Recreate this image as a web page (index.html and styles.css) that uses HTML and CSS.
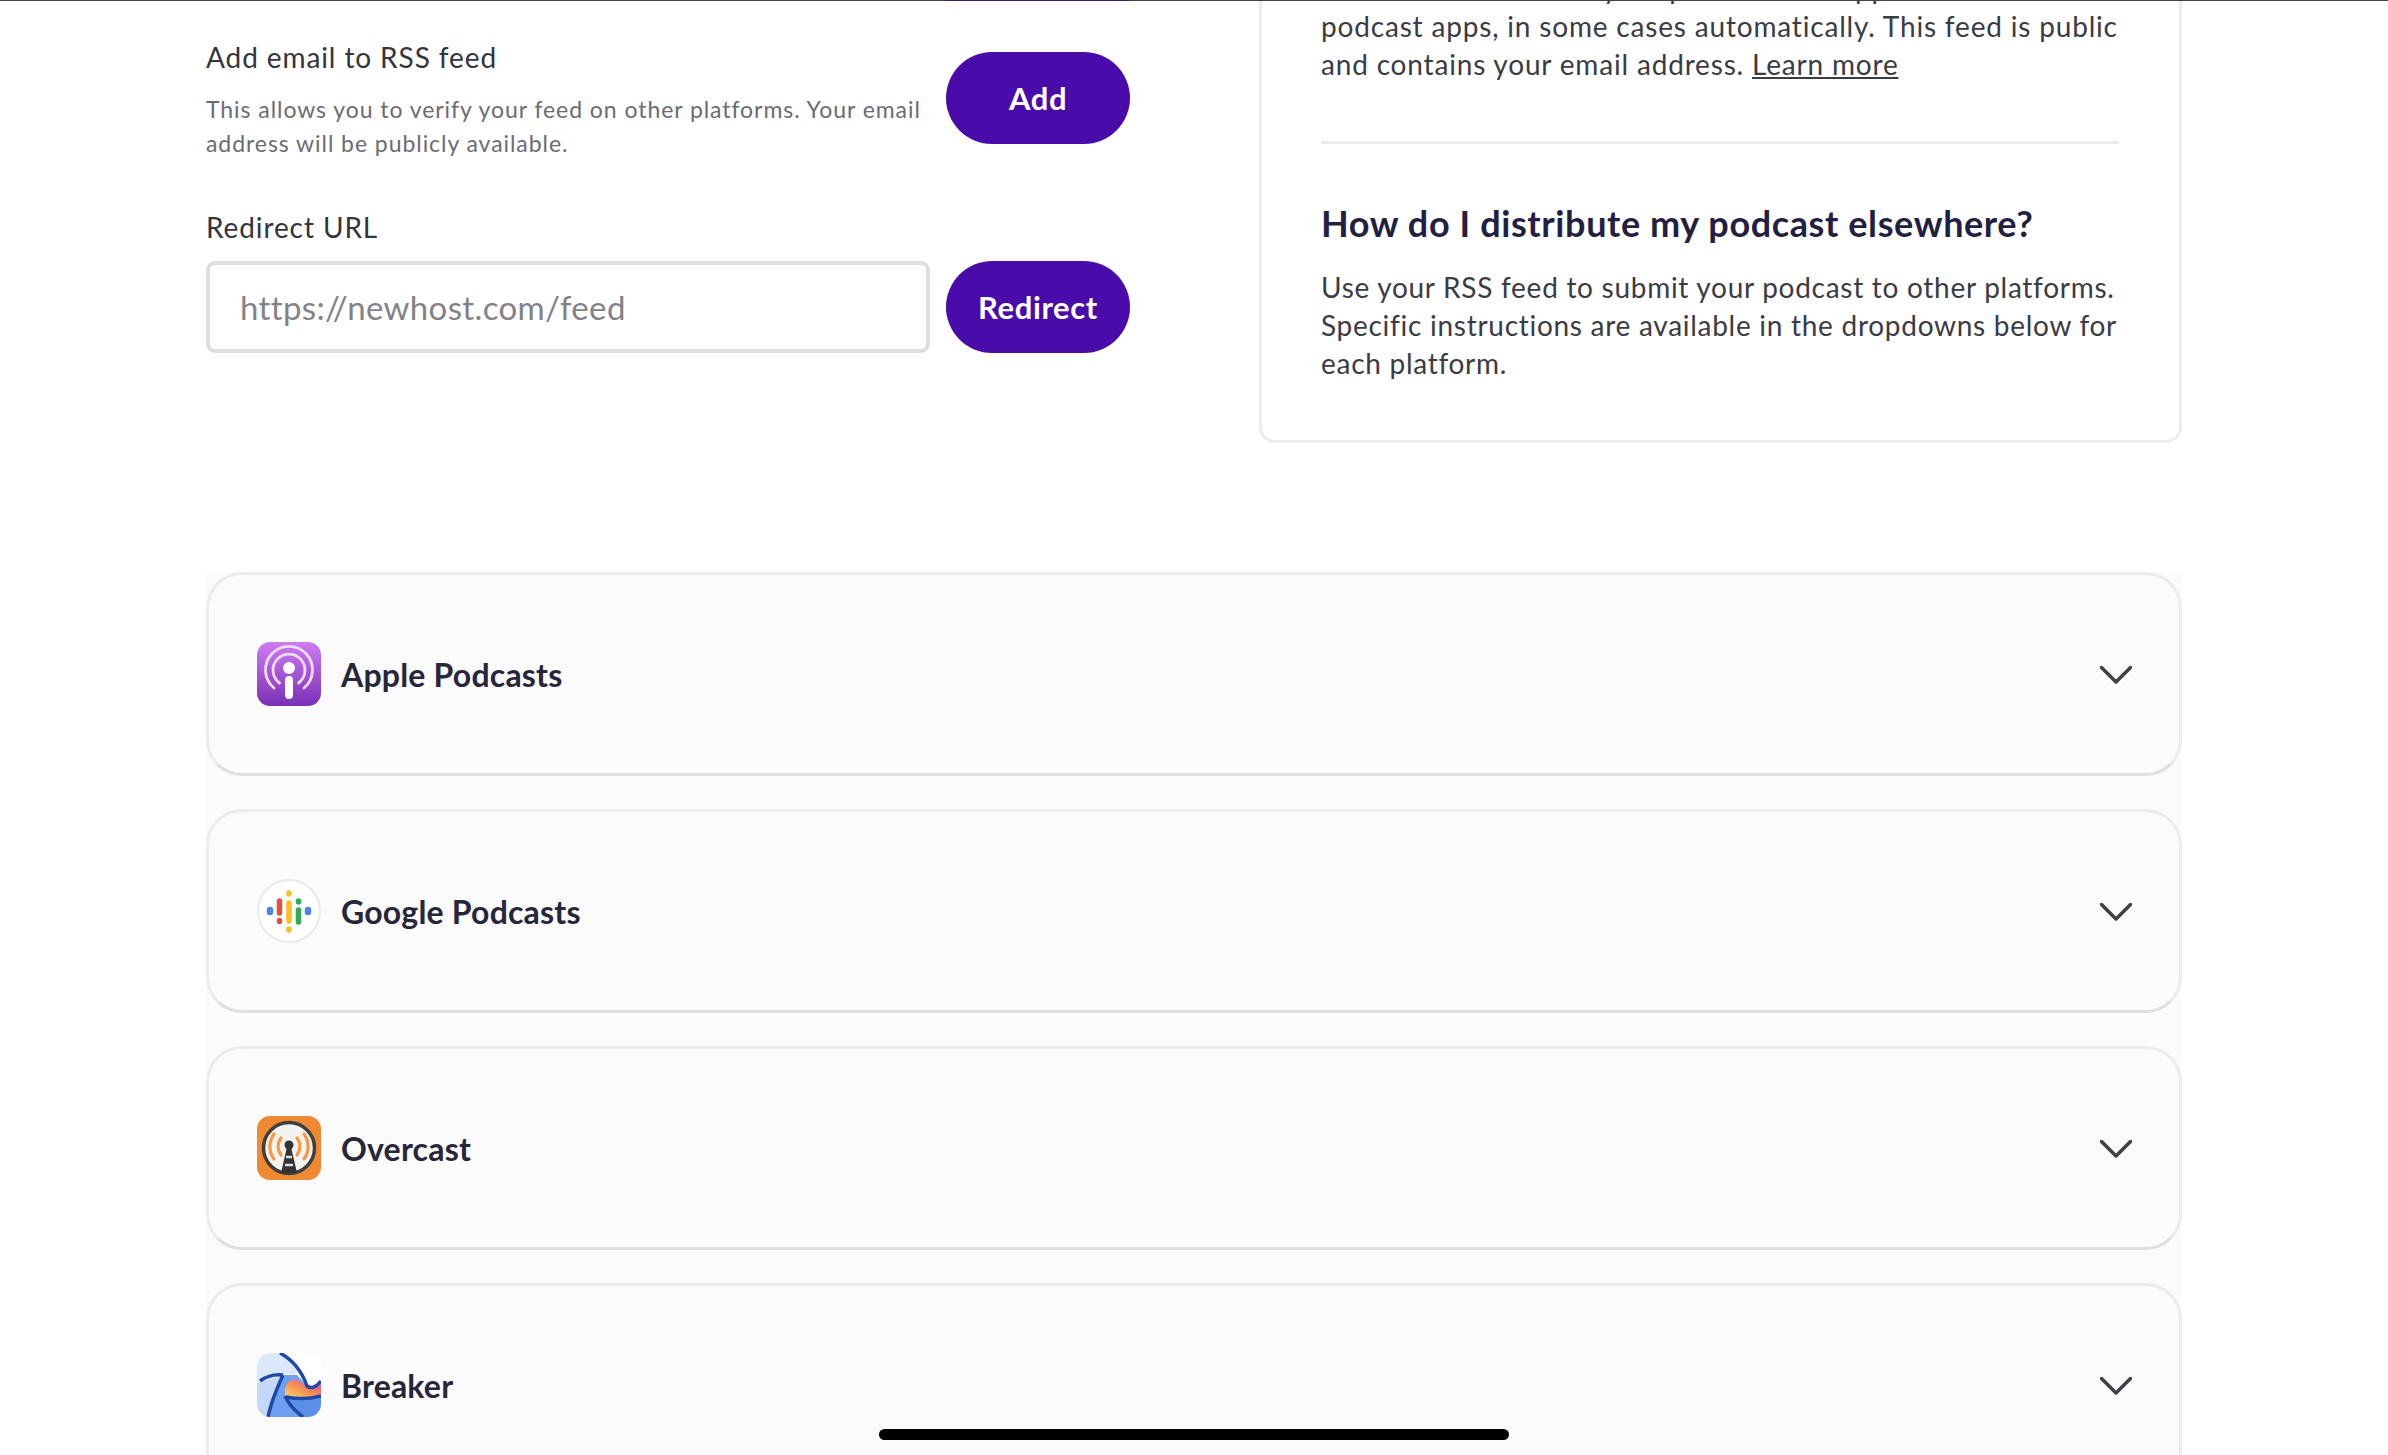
FILE: index.html
```html
<!DOCTYPE html>
<html lang="en">
<head>
<meta charset="utf-8">
<title>Distribution</title>
<link rel="stylesheet" href="styles.css">
</head>
<body>
<div class="topline"><div class="topline-accent"></div></div>
<main class="page">
  <section class="upper">
    <div class="forms">
      <div class="form-row form-row-top">
        <div class="form-copy">
          <div class="label">Add email to RSS feed</div>
          <p class="hint">This allows you to verify your feed on other platforms. Your email address will be publicly available.</p>
        </div>
        <button class="btn btn-top">Add</button>
      </div>
      <div class="label redirect-label">Redirect URL</div>
      <div class="form-row">
        <input class="field" type="text" placeholder="https://newhost.com/feed">
        <button class="btn">Redirect</button>
      </div>
    </div>
    <aside class="help">
      <p class="help-text">Your RSS feed is how your podcast is in apps and other<br>podcast apps, in some cases automatically. This feed is public and contains your email address. <a href="#">Learn more</a></p>
      <hr class="rule">
      <h2 class="help-title">How do I distribute my podcast elsewhere?</h2>
      <p class="help-text help-text-tight">Use your RSS feed to submit your podcast to other platforms. Specific instructions are available in the dropdowns below for each platform.</p>
    </aside>
  </section>
  <section class="platforms">
    <div class="platform">
      <svg class="logo" viewBox="0 0 64 64"><defs><linearGradient id="ap" x1="0" y1="0" x2="0" y2="1"><stop offset="0" stop-color="#cf7cf3"/><stop offset="1" stop-color="#7a2fb5"/></linearGradient></defs><rect width="64" height="64" rx="13" fill="url(#ap)"/><g fill="none" stroke="#f0dcfa" stroke-linecap="round"><path d="M17 46a23.500 23.500 0 1 1 30 0" stroke-width="2.800"/><path d="M22.500 41a16 16 0 1 1 19 0" stroke-width="2.800"/></g><circle cx="32" cy="26" r="6" fill="#fff"/><rect x="28" y="34" width="8" height="23" rx="4" fill="#fff"/></svg>
      <span class="platform-name">Apple Podcasts</span>
      <svg class="chevron" viewBox="0 0 32 18"><path d="M1.500 1.500 16 16 30.500 1.500"/></svg>
    </div>
    <div class="platform">
      <svg class="logo" viewBox="0 0 64 64"><circle cx="32" cy="32" r="31" fill="#fff" stroke="#e9e9e9" stroke-width="2"/><g stroke-linecap="round" fill="none" stroke-width="5.500"><path d="M13 31v2M51 31v2" stroke="#4a86e8" stroke-width="6.500"/><path d="M22.500 22v12" stroke="#e0523f"/><path d="M22.500 41.500v1" stroke="#e0523f"/><path d="M32 14v1M32 24v18M32 50v1" stroke="#f6bf26"/><path d="M41.500 22v1" stroke="#34a853"/><path d="M41.500 31v12" stroke="#34a853"/></g></svg>
      <span class="platform-name">Google Podcasts</span>
      <svg class="chevron" viewBox="0 0 32 18"><path d="M1.500 1.500 16 16 30.500 1.500"/></svg>
    </div>
    <div class="platform">
      <svg class="logo" viewBox="0 0 64 64"><rect width="64" height="64" rx="13" fill="#f08a32"/><circle cx="32" cy="32" r="25.500" fill="#f4f2ef" stroke="#3f3f3f" stroke-width="3.500"/><g fill="none" stroke="#f39a46" stroke-width="3.200" stroke-linecap="round"><path d="M24 22a14 14 0 0 0 0 17"/><path d="M40 22a14 14 0 0 1 0 17"/><path d="M17 18a21 21 0 0 0 0 25"/><path d="M47 18a21 21 0 0 1 0 25"/></g><circle cx="32" cy="29" r="4.500" fill="#333"/><path d="M30 31h4l6 26h-16z" fill="#333"/><path d="M29 41h6M28 49h8" stroke="#ddd" stroke-width="2.500"/></svg>
      <span class="platform-name">Overcast</span>
      <svg class="chevron" viewBox="0 0 32 18"><path d="M1.500 1.500 16 16 30.500 1.500"/></svg>
    </div>
    <div class="platform">
      <svg class="logo" viewBox="0 0 64 64"><defs><clipPath id="br"><rect width="64" height="64" rx="13"/></clipPath><linearGradient id="bs" x1="0" y1="1" x2="1" y2="0"><stop offset="0" stop-color="#f7d86b"/><stop offset=".45" stop-color="#f5964f"/><stop offset="1" stop-color="#ee3fa5"/></linearGradient></defs><g clip-path="url(#br)"><rect width="64" height="64" fill="#fff"/><path d="M0 0h23c9 5 15 13 18 21L26 21 3 28 0 30z" fill="#dbe8fb"/><path d="M0 30 26 22 11 64H0z" fill="#c4d9f8"/><path d="M26 22h14l10 11-12-5c-6 1-10 5-10 11 0 2 1 5 3 7L46 64H11z" fill="#6f9ff0"/><path d="M28 39c0-8 5-13 11-12 5 1 8 5 12 7 4 1 9 0 13-3v14H33c-3 0-5-2-5-6z" fill="url(#bs)"/><path d="M31 45c10 2 23 2 33-1v20H46C38 59 33 52 31 45z" fill="#5b8fe8"/><g fill="none" stroke="#1f49a8" stroke-width="3.500"><path d="M23 0c13 7 22 19 27 33 4 3 9 1 14-5"/><path d="M3 28c7-5 15-7 23-6"/><path d="M26 22C20 35 14 49 11 64"/><path d="M28 43c3 7 10 15 18 21"/><path d="M29 44c10 2 24 2 35-1"/></g></g></svg>
      <span class="platform-name">Breaker</span>
      <svg class="chevron" viewBox="0 0 32 18"><path d="M1.500 1.500 16 16 30.500 1.500"/></svg>
    </div>
  </section>
</main>
<div class="home-bar"></div>
</body>
</html>
```
FILE: styles.css
```css
* { box-sizing: border-box; }
html, body { margin: 0; height: 100%; background: #fff; overflow: hidden; }
body { font-family: Lato, "Noto Sans", sans-serif; color: #2f2f38; height: 1455px; }
.topline { position: absolute; left: 0; right: 0; top: 0; height: 1px; background: #444; z-index: 2; }
.topline-accent { width: 184px; height: 1px; margin-left: 946px; background: #3b1e78; }
.page { padding: 0 206px; }
.upper { display: flex; justify-content: space-between; align-items: flex-start; height: 572px; }
.forms { width: 924px; padding-top: 39px; }
.form-row { display: flex; align-items: center; gap: 16px; }
.form-row-top { align-items: flex-start; }
.form-copy { flex: 1; }
.label { font-size: 28px; line-height: 36px; letter-spacing: 0.9px; color: #34343c; }
.hint { margin: 17px 0 0; font-size: 23px; line-height: 34px; letter-spacing: 0.94px; color: #6b6b73; }
.redirect-label { margin: 49px 0 16px; }
.btn { width: 184px; height: 92px; border: 0; border-radius: 46px; background: #4a0bab; color: #fff; font: 700 31px/1 Lato, sans-serif; letter-spacing: 0.6px; flex: none; }
.btn-top { margin-top: 13px; }
.field { flex: 1; min-width: 0; height: 92px; border: 4px solid #dedede; border-radius: 9px; background: #fff; padding: 0 30px; font: 400 33px Lato, sans-serif; letter-spacing: 0.35px; }
.field::placeholder { color: #828288; opacity: 1; }
.help { width: 923px; height: 444px; margin-top: -1px; border: 3px solid #ececec; border-top: 0; border-radius: 0 0 16px 16px; padding: 0 60px 0 59px; }
.help-text { margin: 0; font-size: 28px; line-height: 38px; letter-spacing: 0.82px; color: #3b3b43; }
.help-text:first-child { margin-top: -30px; }
.help-text-tight { letter-spacing: 0.72px; }
.help-text a { color: inherit; }
.rule { border: 0; height: 3px; background: #ebebeb; margin: 58px 0 0; }
.help-title { margin: 54px 0 0; font-size: 36px; line-height: 50px; font-weight: 700; letter-spacing: 0.6px; color: #231f42; }
.help-title + .help-text { margin-top: 20px; }
.platforms { background: #fbfbfb; display: flex; flex-direction: column; gap: 33px; }
.platform { display: flex; align-items: center; gap: 20px; height: 204px; padding: 0 47px 0 48px; border: 3px solid #ececec; border-bottom-color: #dfdfdf; border-radius: 36px; }
.logo { width: 64px; height: 64px; flex: none; filter: blur(0.7px); }
.platform-name { flex: 1; font-size: 32px; font-weight: 700; letter-spacing: 0.2px; color: #27263a; }
.chevron { width: 32px; height: 18px; flex: none; margin-top: 2px; fill: none; stroke: #3e4047; stroke-width: 3.500; stroke-linecap: round; stroke-linejoin: round; }
.home-bar { position: absolute; left: 879px; top: 1429px; width: 630px; height: 11px; border-radius: 6px; background: #000; }
```
